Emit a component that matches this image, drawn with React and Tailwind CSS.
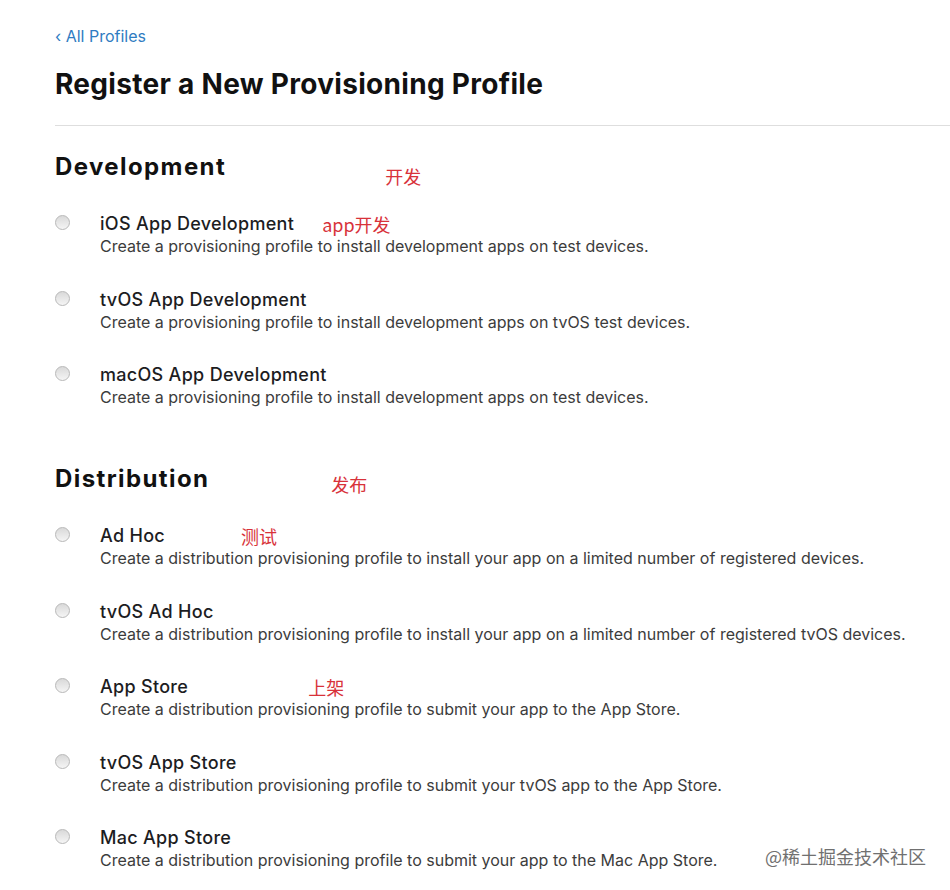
import React from "react";

const dev = [
  { t: "iOS App Development", d: "Create a provisioning profile to install development apps on test devices.", note: "app开发", noteCls: "ml-[28px]" },
  { t: "tvOS App Development", d: "Create a provisioning profile to install development apps on tvOS test devices." },
  { t: "macOS App Development", d: "Create a provisioning profile to install development apps on test devices." },
];
const dist = [
  { t: "Ad Hoc", d: "Create a distribution provisioning profile to install your app on a limited number of registered devices.", note: "测试", noteCls: "ml-[76px]" },
  { t: "tvOS Ad Hoc", d: "Create a distribution provisioning profile to install your app on a limited number of registered tvOS devices." },
  { t: "App Store", d: "Create a distribution provisioning profile to submit your app to the App Store.", note: "上架", noteCls: "ml-[120px]" },
  { t: "tvOS App Store", d: "Create a distribution provisioning profile to submit your tvOS app to the App Store." },
  { t: "Mac App Store", d: "Create a distribution provisioning profile to submit your app to the Mac App Store." },
];

const cjk = { fontFamily: '"Noto Sans CJK SC", "Noto Sans", sans-serif' };

function Note({ className, children }) {
  return (
    <span className={"text-[18px] leading-[22px] text-[#d8323a] tracking-normal font-normal " + className} style={cjk}>
      {children}
    </span>
  );
}

function Row({ item }) {
  return (
    <div className="flex items-start">
      <div className="w-[45px] shrink-0 pt-[3px]">
        <div className="w-[15px] h-[15px] rounded-full border border-[#b8b8b8] bg-gradient-to-b from-[#d9d9d9] to-[#f5f5f5]" />
      </div>
      <div>
        <div className="flex items-center h-[23px]">
          <span className="text-[18px] leading-[23px] font-medium text-[#1d1d1f] tracking-[0.3px]">{item.t}</span>
          {item.note && <Note className={item.noteCls}>{item.note}</Note>}
        </div>
        <div className="text-[16px] leading-[23px] text-[#3c3c3c]">{item.d}</div>
      </div>
    </div>
  );
}

function Section({ title, note, noteCls, items, className }) {
  return (
    <section className={className}>
      <div className="flex items-start h-[32px] overflow-visible">
        <h2 className="text-[24px] leading-[32px] font-bold text-[#111] tracking-[1.4px]">{title}</h2>
        <Note className={noteCls}>{note}</Note>
      </div>
      <div className="mt-[29px] flex flex-col gap-[29.5px]">
        {items.map((it) => (
          <Row key={it.t} item={it} />
        ))}
      </div>
    </section>
  );
}

export default function App() {
  return (
    <div className="relative w-[950px] h-[890px] bg-white overflow-hidden" style={{ fontFamily: 'Inter, "Noto Sans CJK SC", sans-serif' }}>
      <div className="pl-[55px] pt-6">
        <div className="text-[16px] leading-[24px] text-[#2f7cc2]">‹ All Profiles</div>
        <h1 className="mt-[18px] text-[28px] leading-[36px] font-bold text-[#111] tracking-[0.3px]">Register a New Provisioning Profile</h1>
        <div className="mt-[23px] h-px bg-[#dedede]" />
        <Section
          className="mt-[25px]"
          title="Development"
          note="开发"
          noteCls="ml-[159px] mt-[14px]"
          items={dev}
        />
        <Section
          className="mt-[54px]"
          title="Distribution"
          note="发布"
          noteCls="ml-[122px] mt-[10px]"
          items={dist}
        />
      </div>
      <div
        className="absolute left-[765px] top-[844px] text-[18px] leading-[24px] text-[#707070]"
        style={cjk}
      >
        @稀土掘金技术社区
      </div>
    </div>
  );
}
